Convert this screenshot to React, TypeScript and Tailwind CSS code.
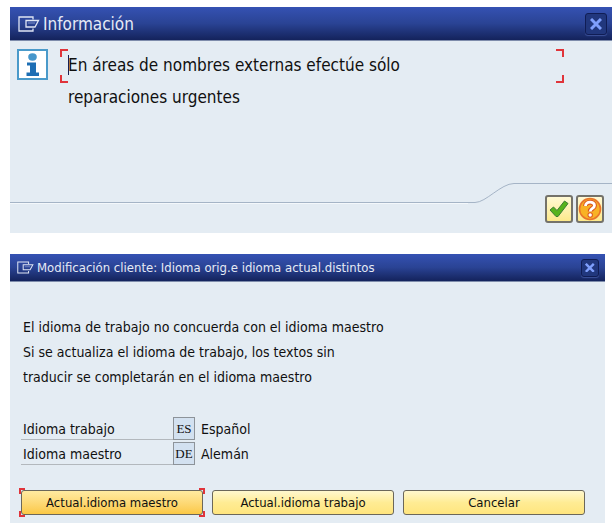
import React, { FC, ReactNode } from 'react'

const ExitIcon: FC<{ className: string }> = ({ className }) => (
    <svg className={className} viewBox="0 0 22 16" fill="none" stroke="#dfe5f4" strokeWidth="1.3">
        <path d="M15 3.500V1H1v14h14v-2.500" />
        <path d="M8 4.500h12.500L17 11H8z" />
        <path d="M10 7h7" strokeWidth="0.8" stroke="#93a3d6" />
    </svg>
)

const CloseButton: FC<{ className: string }> = ({ className }) => (
    <button
        type="button"
        aria-label="Cerrar"
        className={`flex items-center justify-center rounded-[3px] border border-[#101d55] bg-[#21377d] shadow-[0_1px_1px_#3c5199] ${className}`}
    >
        <svg className="h-[60%] w-[60%]" viewBox="0 0 12 12" stroke="#7f9ffc" strokeWidth="3">
            <path d="M1 1l10 10M11 1L1 11" />
        </svg>
    </button>
)

// red corner marks around the focused element
const FocusCorners: FC<{ size: string }> = ({ size }) => (
    <span className="pointer-events-none absolute inset-0" aria-hidden="true">
        <span className={`absolute left-0 top-0 border-l-2 border-t-2 border-[#e0343a] ${size}`} />
        <span className={`absolute right-0 top-0 border-r-2 border-t-2 border-[#e0343a] ${size}`} />
        <span className={`absolute bottom-0 left-0 border-b-2 border-l-2 border-[#e0343a] ${size}`} />
        <span className={`absolute bottom-0 right-0 border-b-2 border-r-2 border-[#e0343a] ${size}`} />
    </span>
)

const InfoIcon: FC = () => (
    <svg className="h-[31px] w-[31px] shrink-0" viewBox="0 0 31 31">
        <rect x="1" y="1" width="29" height="29" fill="#fff" stroke="#4a9aca" strokeWidth="2" />
        <ellipse cx="15.500" cy="8" rx="4.300" ry="3.700" fill="#4596cb" />
        <path d="M10 13.500h9v10h3V27H9.500v-3.500h3.500v-7h-3z" fill="#1d6eb4" />
    </svg>
)

const CheckIcon: FC = () => (
    <svg className="h-5 w-5 shrink-0" viewBox="0 0 20 20">
        <path d="M1 11l3.500-3L8 11.500 15.500 2 19 4.500 9 17.500H7z" fill="#57b31c" stroke="#3c7c35" strokeLinejoin="round" />
    </svg>
)

const HelpIcon: FC = () => (
    <svg className="h-6 w-6 shrink-0" viewBox="0 0 24 24" fill="none">
        <circle cx="12" cy="12" r="10.500" fill="#f8b225" stroke="#e9742a" strokeWidth="1.600" />
        <path d="M7.500 9c0-5 9-5 9-.5 0 3-4.300 2.800-4.300 6" stroke="#dc5720" strokeWidth="5" />
        <circle cx="12.200" cy="18" r="2.700" fill="#dc5720" />
        <path d="M7.500 9c0-5 9-5 9-.5 0 3-4.300 2.800-4.300 6" stroke="#fff" strokeWidth="2.800" />
        <circle cx="12.200" cy="18" r="1.700" fill="#fff" />
    </svg>
)

interface IconButtonProps {
    label: string;
    children: ReactNode;
}

const IconButton: FC<IconButtonProps> = ({ label, children }) => (
    <button
        type="button"
        aria-label={label}
        className="flex h-7 w-7 items-center justify-center rounded-[3px] border-2 border-[#74726a] bg-linear-to-b from-[#fff9d4] to-[#fde98a]"
    >
        {children}
    </button>
)

interface ActionButtonProps {
    label: string;
    focused?: boolean;
}

const ActionButton: FC<ActionButtonProps> = ({ label, focused }) => (
    <div className="relative flex-1 p-[2px]">
        {focused && <FocusCorners size="h-[6px] w-[6px]" />}
        <button
            type="button"
            className={`relative flex h-[25px] w-full items-center justify-center rounded-[3px] border border-[#6b675a] bg-linear-to-b text-[13px] ${
                focused ? 'from-[#ffeba0] to-[#fbc843]' : 'from-[#fff8ce] via-[#ffec94] to-[#ffe57e]'
            }`}
        >
            {label}
        </button>
    </div>
)

interface LanguageRowProps {
    id: string;
    label: string;
    code: string;
    name: string;
}

const LanguageRow: FC<LanguageRowProps> = ({ id, label, code, name }) => (
    <div className="flex h-[25px] items-end">
        <label htmlFor={id} className="h-[22px] w-[152px] border-b border-[#b3b8bd] pl-[2px] leading-[22px]">{label}</label>
        <input
            id={id}
            readOnly
            defaultValue={code}
            className="h-[23px] w-[22px] border border-[#8d9399] bg-[#d3e1f0] text-center font-['Liberation_Serif',serif] text-[13px] outline-none"
        />
        <span className="pl-[6px] leading-[22px]">{name}</span>
    </div>
)

const InfoDialog: FC = () => (
    <section className="bg-[#e4ecf3]">
        <header className="flex h-[34px] items-center border-b border-[#7e8cab] bg-linear-to-b from-[#3552b3] via-[#2a4394] to-[#14235c] pl-2 pr-[5px] text-[#e5eaf6]">
            <ExitIcon className="h-4 w-[22px]" />
            <h1 className="flex-1 pl-[3px] text-[17px] leading-6">Información</h1>
            <CloseButton className="h-[22px] w-[22px]" />
        </header>
        <div className="flex items-start gap-3 pl-[7px] pr-12 pt-2">
            <InfoIcon />
            <div className="relative flex-1 pl-2 text-[17px] leading-8">
                <p>En áreas de nombres externas efectúe sólo</p>
                <p>reparaciones urgentes</p>
                <div className="absolute inset-x-0 top-0 h-[34px]">
                    <FocusCorners size="h-2 w-2" />
                    <span className="absolute left-2 top-[6px] h-5 w-px bg-[#182052]" />
                </div>
            </div>
        </div>
        <footer className="mt-[68px]">
            <div className="flex h-[22px]">
                <div className="flex-1 border-b border-[#a5b4c6] shadow-[0_1px_0_#f4f8fb]" />
                <svg className="h-[22px] w-[52px]" viewBox="0 0 52 22" fill="none" stroke="#a5b4c6">
                    <path d="M0 21.500h7C18 21.500 33 2.500 46 2.500h6" />
                </svg>
                <div className="mt-[2px] w-[92px] border-t border-[#a5b4c6]" />
            </div>
            <div className="-mt-[8px] flex justify-end gap-[3px] pb-[10px] pr-2">
                <IconButton label="Aceptar"><CheckIcon /></IconButton>
                <IconButton label="Ayuda"><HelpIcon /></IconButton>
            </div>
        </footer>
    </section>
)

const LanguageDialog: FC = () => (
    <section className="mr-[7px] bg-[#e4ecf3] text-[14px]">
        <header className="flex h-7 items-center border-b border-[#7e8cab] bg-linear-to-b from-[#3552b3] via-[#2a4394] to-[#14235c] pl-[7px] pr-[6px] text-[#e5eaf6]">
            <ExitIcon className="h-[13px] w-[17px]" />
            <h2 className="flex-1 pl-[3px] text-[13px] leading-5">Modificación cliente: Idioma orig.e idioma actual.distintos</h2>
            <CloseButton className="h-[18px] w-[18px]" />
        </header>
        <div className="px-[11px] pt-[33px]">
            <div className="pl-[2px] leading-[25px]">
                <p>El idioma de trabajo no concuerda con el idioma maestro</p>
                <p>Si se actualiza el idioma de trabajo, los textos sin</p>
                <p>traducir se completarán en el idioma maestro</p>
            </div>
            <div className="pt-[25px]">
                <LanguageRow id="work" label="Idioma trabajo" code="ES" name="Español" />
                <LanguageRow id="master" label="Idioma maestro" code="DE" name="Alemán" />
            </div>
        </div>
        <div className="flex gap-[5px] pb-[6px] pl-[9px] pr-[18px] pt-[23px]">
            <ActionButton label="Actual.idioma maestro" focused />
            <ActionButton label="Actual.idioma trabajo" />
            <ActionButton label="Cancelar" />
        </div>
    </section>
)

const App: FC = () => (
    <main className="flex min-h-screen flex-col gap-[21px] bg-white pl-[10px] pt-[7px] font-['DejaVu_Sans_Condensed','DejaVu_Sans',sans-serif] text-[#101010]">
        <InfoDialog />
        <LanguageDialog />
    </main>
)

export default App
